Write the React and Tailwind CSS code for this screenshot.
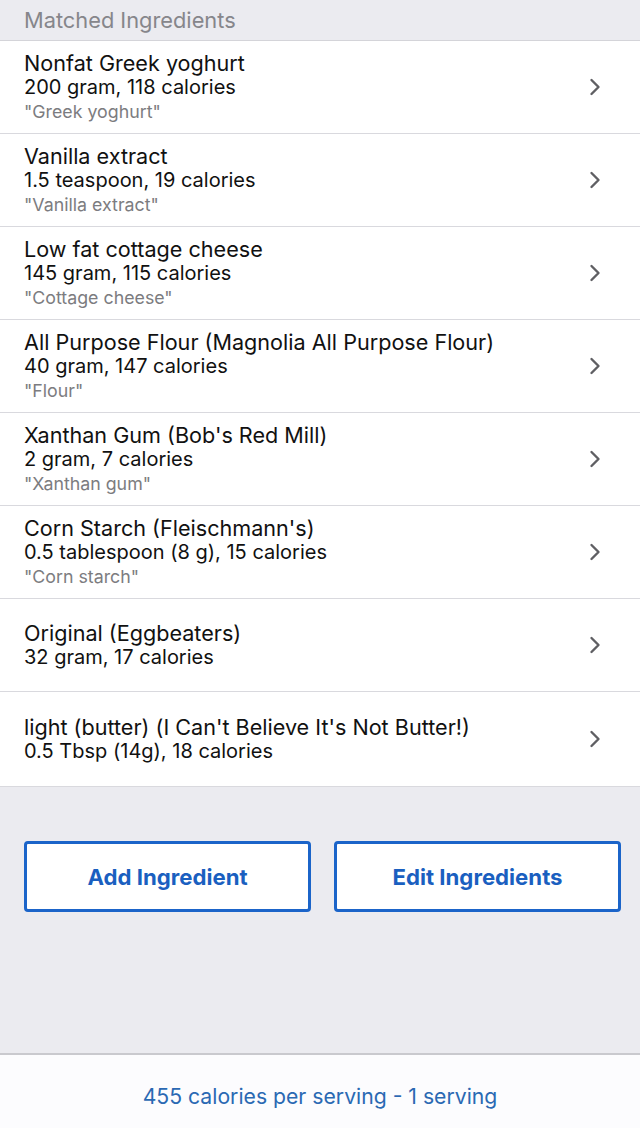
import React from "react";

const items = [
  { name: "Nonfat Greek yoghurt", amount: "200 gram, 118 calories", match: "\"Greek yoghurt\"" },
  { name: "Vanilla extract", amount: "1.5 teaspoon, 19 calories", match: "\"Vanilla extract\"" },
  { name: "Low fat cottage cheese", amount: "145 gram, 115 calories", match: "\"Cottage cheese\"" },
  { name: "All Purpose Flour (Magnolia All Purpose Flour)", amount: "40 gram, 147 calories", match: "\"Flour\"" },
  { name: "Xanthan Gum (Bob's Red Mill)", amount: "2 gram, 7 calories", match: "\"Xanthan gum\"" },
  { name: "Corn Starch (Fleischmann's)", amount: "0.5 tablespoon (8 g), 15 calories", match: "\"Corn starch\"" },
  { name: "Original (Eggbeaters)", amount: "32 gram, 17 calories" },
  { name: "light (butter) (I Can't Believe It's Not Butter!)", amount: "0.5 Tbsp (14g), 18 calories", last: true },
];

function Chevron() {
  return (
    <svg width="12" height="18" viewBox="0 0 12 18" fill="none">
      <path d="M2.5 2 L9.5 9 L2.5 16" stroke="#5f5f63" strokeWidth="2.4" strokeLinecap="round" strokeLinejoin="round" />
    </svg>
  );
}

function Row({ item }) {
  return (
    <div className={`flex items-center border-b border-[#d9d9de] bg-white pl-6 pr-[39px] ${item.last ? "h-[95px]" : "h-[93px]"}`}>
      <div className="flex-1 flex flex-col justify-center">
        <p className="text-[21.6px] leading-[24px] text-[#111]">{item.name}</p>
        <p className="text-[20px] leading-[25px] text-[#111]">{item.amount}</p>
        {item.match && <p className="text-[17.8px] leading-[23px] text-[#7c7c80]">{item.match}</p>}
      </div>
      <Chevron />
    </div>
  );
}

export default function App() {
  return (
    <div className="w-[640px] h-[1128px] flex flex-col bg-[#ebebf0]" style={{ fontFamily: "Inter, 'Noto Sans', sans-serif" }}>
      <div className="h-[41px] flex items-center pl-6 border-b border-[#d4d4d9]">
        <span className="text-[21.8px] text-[#86868b]">Matched Ingredients</span>
      </div>
      <div className="flex flex-col">
        {items.map((it, i) => (
          <Row key={i} item={it} />
        ))}
      </div>
      <div className="flex-1 flex items-start gap-[23px] pl-6 pt-[54px]">
        <button className="w-[287px] h-[71px] bg-white border-[3px] border-[#1b64c9] rounded-[4px] text-[22.2px] font-bold text-[#1a5fc0]">
          Add Ingredient
        </button>
        <button className="w-[287px] h-[71px] bg-white border-[3px] border-[#1b64c9] rounded-[4px] text-[22.2px] font-bold text-[#1a5fc0]">
          Edit Ingredients
        </button>
      </div>
      <div className="h-[75px] border-t-2 border-[#c9c9ce] bg-[#fcfcfe] flex items-center justify-center pt-[10px]">
        <span className="text-[21.2px] text-[#2a69b3]">455 calories per serving - 1 serving</span>
      </div>
    </div>
  );
}
